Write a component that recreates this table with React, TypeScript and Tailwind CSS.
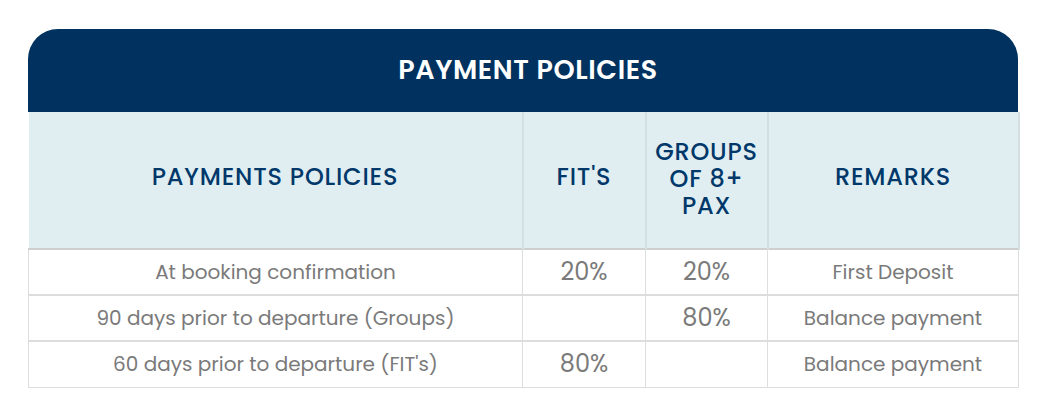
import React from "react";

const rows = [
    { label: "At booking confirmation", fits: "20%", groups: "20%", remark: "First Deposit" },
    { label: "90 days prior to departure (Groups)", fits: "", groups: "80%", remark: "Balance payment" },
    { label: "60 days prior to departure (FIT's)", fits: "80%", groups: "", remark: "Balance payment" },
];

export default function App() {
    return (
        <div className="w-[1039px] h-[419px] bg-white pt-[29px] pl-[28px]" style={{ fontFamily: '"Poppins", "Open Sans", sans-serif' }}>
            <div className="w-[990px]">
                <div className="h-[83px] bg-[#01325f] rounded-tl-[30px] rounded-tr-[30px] flex items-center justify-center">
                    <h2 className="text-white text-[27px] font-semibold tracking-[0.6px] pl-[10px]">PAYMENT POLICIES</h2>
                </div>
                <table className="w-full table-fixed border-collapse">
                    <colgroup>
                        <col className="w-[494px]" />
                        <col className="w-[123px]" />
                        <col className="w-[122px]" />
                        <col className="w-[251px]" />
                    </colgroup>
                    <thead>
                        <tr className="h-[137px] bg-[#e0eef2] text-[#01386a] text-[24px] leading-[27px] tracking-[0.8px]">
                            <th className="border-r-2 border-[#d3dfe3] font-medium pb-[8px]">PAYMENTS POLICIES</th>
                            <th className="border-r-2 border-[#d3dfe3] font-medium pb-[8px]">FIT'S</th>
                            <th className="border-r-2 border-[#d3dfe3] font-medium px-1 pb-[4px]">GROUPS OF 8+ PAX</th>
                            <th className="border-r-2 border-[#d3dfe3] font-medium pb-[8px]">REMARKS</th>
                        </tr>
                    </thead>
                    <tbody className="text-[#7a7a7a]">
                        {rows.map((r, i) => (
                            <tr key={i} className="h-[46px] border-t-2 border-[#dcdcdc] first:border-[#cfcfcf]">
                                <td className="border border-[#dedede] text-center text-[20px]">{r.label}</td>
                                <td className="border border-[#dedede] text-center text-[24px]">{r.fits}</td>
                                <td className="border border-[#dedede] text-center text-[24px]">{r.groups}</td>
                                <td className="border border-[#dedede] text-center text-[20px]">{r.remark}</td>
                            </tr>
                        ))}
                    </tbody>
                </table>
            </div>
        </div>
    );
}
